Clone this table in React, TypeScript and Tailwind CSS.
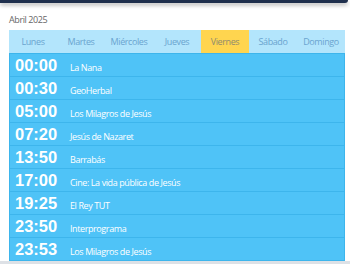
import React from "react";

const days = ["Lunes", "Martes", "Miércoles", "Jueves", "Viernes", "Sábado", "Domingo"];
const rows: [string, string][] = [
  ["00:00", "La Nana"],
  ["00:30", "GeoHerbal"],
  ["05:00", "Los Milagros de Jesús"],
  ["07:20", "Jesús de Nazaret"],
  ["13:50", "Barrabás"],
  ["17:00", "Cine: La vida pública de Jesús"],
  ["19:25", "El Rey TUT"],
  ["23:50", "Interprograma"],
  ["23:53", "Los Milagros de Jesús"],
];

export default function App() {
  return (
    <div className="w-[350px] h-[264px] bg-white overflow-hidden flex flex-col" style={{ fontFamily: "'Open Sans', 'Noto Sans', sans-serif" }}>
      <div className="h-[3px] w-[348px] shrink-0 bg-[#1f2f4d] rounded-br-[3px] shadow-[0_2px_4px_rgba(0,0,0,0.35)]" />
      <div className="pt-[11px] pl-[9px] h-[26px] shrink-0">
        <div className="text-[9px] tracking-[-0.4px] leading-[12px] h-[12px] text-[#666]">Abril 2025</div>
      </div>
      <div className="ml-[9px] w-[336px] mt-[1px] shrink-0">
        <div className="grid grid-cols-7 h-[23px] bg-[#b3e5fc]">
          {days.map((d) => (
            <div
              key={d}
              className={
                d === "Viernes"
                  ? "flex items-center justify-center text-[9px] tracking-[-0.4px] bg-[#ffd54f] text-[#8f8b6e]"
                  : "flex items-center justify-center text-[9px] tracking-[-0.4px] text-[#6aa4cf]"
              }
            >
              {d}
            </div>
          ))}
        </div>
        <div className="border-x border-b border-[#3db5ec] bg-[#4fc3f7]">
          {rows.map(([t, p]) => (
            <div key={t + p} className="flex items-baseline h-[23px] border-t border-[#3db5ec] text-white">
              <div className="w-[60px] pl-[5px] text-[16.5px] leading-[22px] font-bold" style={{ fontFamily: "'Liberation Sans', Arial, sans-serif" }}>
                {t}
              </div>
              <div className="text-[9px] tracking-[-0.4px] leading-[22px]">{p}</div>
            </div>
          ))}
        </div>
      </div>
      <div className="mt-auto h-[3px] w-full bg-[#dde1e6]" />
    </div>
  );
}
